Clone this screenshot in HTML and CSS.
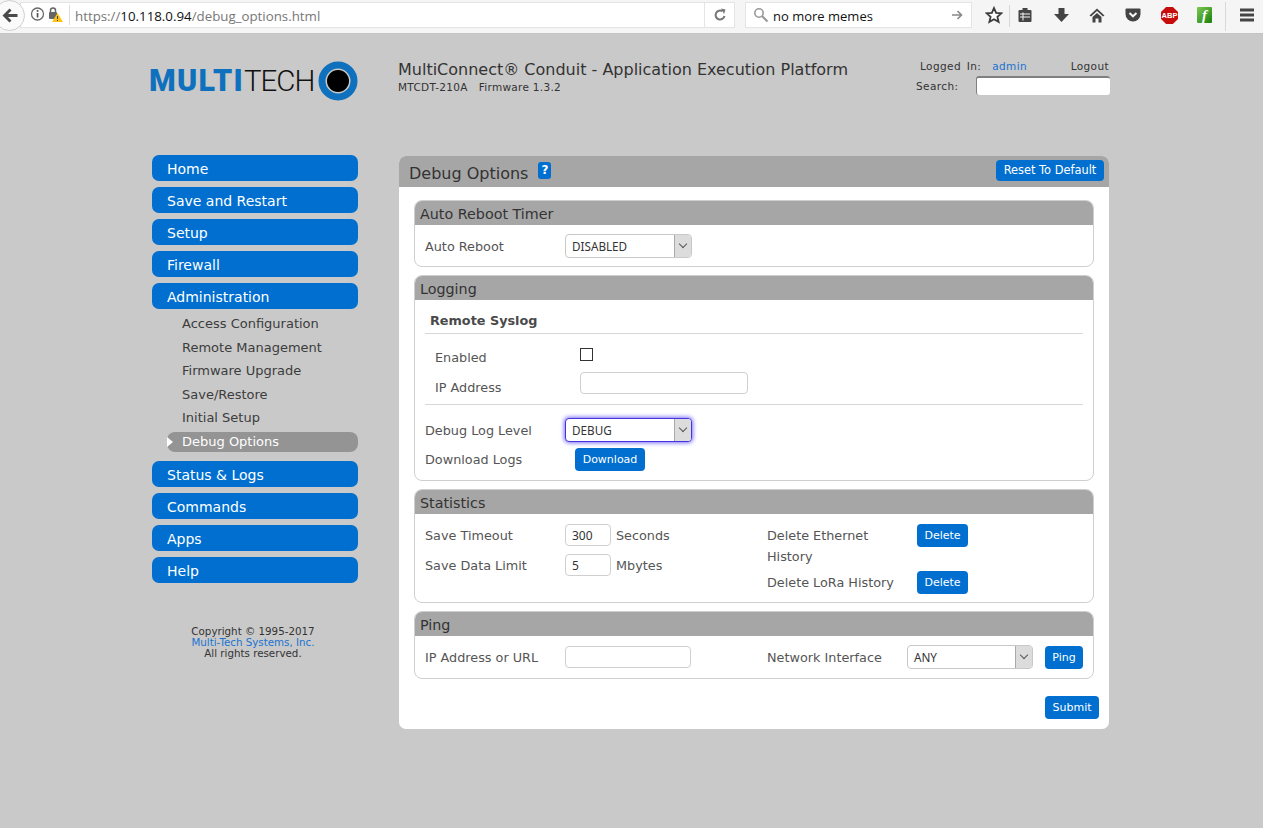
FILE: index.html
```html
<!DOCTYPE html>
<html lang="en">
<head>
  <meta charset="UTF-8">
  <title>Debug Options</title>
  <link rel="stylesheet" href="styles.css">
</head>
<body>
  <div class="browser-bar">
    <div class="back-btn">
      <svg width="16" height="15" viewBox="0 0 16 15"><path d="M7.5 0.5 L0.5 7.5 L7.5 14.5 L9.5 12.5 L6 9 H15.5 V6 H6 L9.5 2.5 Z" fill="#4a4a4a"/></svg>
    </div>
    <div class="url-box">
      <svg class="url-icons" width="34" height="18" viewBox="0 0 34 18">
        <circle cx="7.5" cy="8" r="6" fill="#fff" stroke="#6a6a6a" stroke-width="1.3"/>
        <rect x="6.7" y="7" width="1.7" height="4.5" fill="#555"/><rect x="6.7" y="4" width="1.7" height="1.8" fill="#555"/>
        <rect x="19" y="6" width="8" height="7" rx="1" fill="#666"/>
        <path d="M20.5 6 V4.5 a2.5 2.5 0 0 1 5 0 V6" fill="none" stroke="#666" stroke-width="1.5"/>
        <path d="M27.5 7 L33 16 H22 Z" fill="#fdc21a"/>
        <rect x="27" y="10" width="1" height="3" fill="#444"/><rect x="27" y="14" width="1" height="1" fill="#444"/>
      </svg>
      <span class="url-sep"></span>
      <span class="url-text">https://<b>10.118.0.94</b>/debug_options.html</span>
      <span class="url-reload">
        <svg width="14" height="14" viewBox="0 0 14 14"><path d="M11.5 8 A4.5 4.5 0 1 1 9.5 3.2" fill="none" stroke="#777" stroke-width="2"/><path d="M8 0.5 L12.5 1.5 L11 6 Z" fill="#777"/></svg>
      </span>
    </div>
    <div class="search-box">
      <svg width="16" height="16" viewBox="0 0 16 16"><circle cx="6" cy="6" r="4.2" fill="none" stroke="#999" stroke-width="1.6"/><path d="M9 9 L14.5 14.5" stroke="#999" stroke-width="2.2"/></svg>
      <span class="search-text">no more memes</span>
      <svg class="search-go" width="12" height="12" viewBox="0 0 12 12"><path d="M1 6 H10 M6.5 2 L10.5 6 L6.5 10" fill="none" stroke="#888" stroke-width="1.6"/></svg>
    </div>
    <div class="tool-icons">
      <svg class="i-star" width="18" height="18" viewBox="0 0 18 18"><path d="M9 2 L11.1 6.8 L16.3 7.3 L12.4 10.8 L13.6 15.9 L9 13.2 L4.4 15.9 L5.6 10.8 L1.7 7.3 L6.9 6.8 Z" fill="#fff" stroke="#3c3c3c" stroke-width="1.8"/></svg>
      <span class="tool-sep"></span>
      <svg class="i-clip" width="14" height="16" viewBox="0 0 14 16"><path d="M1.5 3 H12.5 Q13.5 3 13.5 4 V14 Q13.5 15 12.5 15 H1.5 Q0.5 15 0.5 14 V4 Q0.5 3 1.5 3 Z" fill="#444"/><rect x="4.5" y="1" width="5" height="3" fill="#444"/><path d="M2 7 H12 M2 10 H12 M5 5.5 V13.5" stroke="#f5f5f5" stroke-width="1"/></svg>
      <svg class="i-down" width="15" height="16" viewBox="0 0 15 16"><path d="M4.5 1 H10.5 V7 H15 L7.5 15 L0 7 H4.5 Z" fill="#444"/></svg>
      <svg class="i-home" width="16" height="15" viewBox="0 0 16 15"><path d="M8 0.5 L15.5 7.5 L14 8.5 L8 3 L2 8.5 L0.5 7.5 Z M3.5 9 L8 5 L12.5 9 V14.5 H9.5 V10.5 H6.5 V14.5 H3.5 Z" fill="#444"/></svg>
      <svg class="i-pocket" width="16" height="14" viewBox="0 0 16 14"><path d="M1.5 0.5 H14.5 Q15.5 0.5 15.5 1.5 V6 A7.5 7.5 0 0 1 0.5 6 V1.5 Q0.5 0.5 1.5 0.5 Z" fill="#444"/><path d="M4.5 5 L8 8.3 L11.5 5" fill="none" stroke="#f5f5f5" stroke-width="2"/></svg>
      <span class="i-abp">ABP</span>
      <span class="i-flash">f</span>
      <span class="tool-sep tool-sep-menu"></span>
      <svg class="i-menu" width="16" height="14" viewBox="0 0 16 14"><path d="M1 0.5 H15 V3.5 H1 Z M1 5.5 H15 V8.5 H1 Z M1 10.5 H15 V13.5 H1 Z" fill="#444"/></svg>
    </div>
  </div>

  <div class="page">
    <header class="site-header">
      <div class="logo">
        <span class="logo-text"><b>MULTI</b>TECH</span>
        <svg class="logo-mark" width="40" height="40" viewBox="0 0 40 40"><circle cx="20" cy="20" r="11" fill="#000"/><circle cx="20" cy="20" r="16" fill="none" stroke="#0f71bd" stroke-width="7"/></svg>
      </div>
      <div class="product">
        <div class="product-name">MultiConnect® Conduit - Application Execution Platform</div>
        <div class="product-sub">MTCDT-210A&nbsp;&nbsp; Firmware 1.3.2</div>
      </div>
      <div class="user-box">
        <div class="user-row"><span class="user-label">Logged In:</span><a class="user-name">admin</a><span class="user-logout">Logout</span></div>
        <div class="search-row"><span>Search:</span><input class="site-search" type="text"></div>
      </div>
    </header>

    <div class="content">
      <nav class="sidebar">
        <a class="nav-btn">Home</a>
        <a class="nav-btn">Save and Restart</a>
        <a class="nav-btn">Setup</a>
        <a class="nav-btn">Firewall</a>
        <a class="nav-btn">Administration</a>
        <ul class="subnav">
          <li>Access Configuration</li>
          <li>Remote Management</li>
          <li>Firmware Upgrade</li>
          <li>Save/Restore</li>
          <li>Initial Setup</li>
          <li class="active">Debug Options</li>
        </ul>
        <a class="nav-btn">Status &amp; Logs</a>
        <a class="nav-btn">Commands</a>
        <a class="nav-btn">Apps</a>
        <a class="nav-btn">Help</a>
        <div class="copyright">Copyright © 1995-2017<br><a>Multi-Tech Systems, Inc.</a><br>All rights reserved.</div>
      </nav>

      <main class="panel">
        <div class="panel-head">
          <h1>Debug Options</h1>
          <span class="help-badge">?</span>
          <button class="btn btn-reset">Reset To Default</button>
        </div>
        <div class="panel-body">

          <section class="box">
            <h2>Auto Reboot Timer</h2>
            <div class="box-body">
              <div class="row row-reboot">
                <label>Auto Reboot</label>
                <div class="select select-reboot">DISABLED<span class="arrow"></span></div>
              </div>
            </div>
          </section>

          <section class="box">
            <h2>Logging</h2>
            <div class="box-body box-logging">
              <div class="syslog">
                <h3>Remote Syslog</h3>
                <div class="row row-enabled">
                  <label>Enabled</label>
                  <span class="checkbox"></span>
                </div>
                <div class="row row-ip">
                  <label>IP Address</label>
                  <input class="text-input input-ip" type="text">
                </div>
              </div>
              <div class="row row-level">
                <label>Debug Log Level</label>
                <div class="select select-debug">DEBUG<span class="arrow"></span></div>
              </div>
              <div class="row row-download">
                <label>Download Logs</label>
                <button class="btn">Download</button>
              </div>
            </div>
          </section>

          <section class="box">
            <h2>Statistics</h2>
            <div class="box-body stats">
              <div class="stats-col">
                <div class="row row-timeout">
                  <label>Save Timeout</label>
                  <input class="text-input input-small" type="text" value="300">
                  <span class="unit">Seconds</span>
                </div>
                <div class="row row-limit">
                  <label>Save Data Limit</label>
                  <input class="text-input input-small" type="text" value="5">
                  <span class="unit">Mbytes</span>
                </div>
              </div>
              <div class="stats-col stats-right">
                <label class="del-label del-eth">Delete Ethernet History</label>
                <button class="btn btn-del">Delete</button>
                <label class="del-label del-lora">Delete LoRa History</label>
                <button class="btn btn-del">Delete</button>
              </div>
            </div>
          </section>

          <section class="box">
            <h2>Ping</h2>
            <div class="box-body ping">
              <label>IP Address or URL</label>
              <input class="text-input input-url" type="text">
              <label class="net-label">Network Interface</label>
              <div class="select select-net">ANY<span class="arrow"></span></div>
              <button class="btn btn-ping">Ping</button>
            </div>
          </section>

          <div class="submit-row"><button class="btn">Submit</button></div>
        </div>
      </main>
    </div>
  </div>
</body>
</html>
```

FILE: styles.css
```css
* {
  box-sizing: border-box;
}

body {
  margin: 0;
  background-color: #c9c9c9;
  color: #444;
  font-family: "DejaVu Sans", Verdana, sans-serif;
  font-size: 12.8px;
  overflow-x: hidden;
}

/* browser chrome */
.browser-bar {
  display: flex;
  align-items: flex-start;
  height: 34px;
  padding-top: 2px;
  background-color: #f5f5f5;
  border-bottom: 1px solid #c4c4c4;
}

.back-btn {
  position: relative;
  display: flex;
  align-items: center;
  flex: none;
  width: 31px;
  height: 31px;
  margin-top: -2px;
  margin-left: -6px;
  padding-left: 7px;
  background: #fafafa;
  border: 1px solid #cfcfcf;
  border-radius: 50%;
  z-index: 1;
}

.url-box {
  display: flex;
  align-items: center;
  width: 715px;
  height: 26px;
  margin-left: -5px;
  padding-left: 5px;
  background: #fff;
  border: 1px solid #e4e4e4;
  flex: none;
}

.url-icons {
  margin-left: 4px;
  flex: none;
}

.url-sep {
  width: 1px;
  height: 20px;
  background: #dcdcdc;
  margin: 0 5px;
}

.url-text {
  margin-top: 2px;
  font-family: "Open Sans", sans-serif;
  font-size: 13.3px;
  color: #777;
}

.url-text b {
  font-weight: normal;
  color: #111;
}

.url-reload {
  margin-left: auto;
  width: 30px;
  height: 24px;
  border-left: 1px solid #e4e4e4;
  display: flex;
  align-items: center;
  justify-content: center;
}

.search-box {
  display: flex;
  align-items: center;
  width: 227px;
  height: 26px;
  margin-left: 10px;
  padding: 0 8px 0 7px;
  background: #fff;
  border: 1px solid #e4e4e4;
  flex: none;
}

.search-text {
  margin-top: 2px;
  margin-left: 4px;
  font-family: "Open Sans", sans-serif;
  font-size: 13px;
  color: #111;
}

.search-go {
  margin-left: auto;
}

.tool-icons {
  position: relative;
  flex: 1;
  height: 33px;
  margin-top: -2px;
}

.tool-icons > * {
  position: absolute;
}

.i-star { left: 13px; top: 6px; }
.tool-sep { left: 37px; top: 5px; width: 1px; height: 22px; background: #d8d8d8; }
.i-clip { left: 46px; top: 7px; }
.i-down { left: 82px; top: 7px; }
.i-home { left: 117px; top: 8px; }
.i-pocket { left: 153px; top: 8px; }
.tool-sep-menu { left: 253px; top: 2px; height: 29px; }
.i-menu { left: 267px; top: 8px; }

.i-abp {
  left: 189px;
  top: 7px;
  width: 17px;
  height: 17px;
  background: #c70d0c;
  clip-path: polygon(30% 0, 70% 0, 100% 30%, 100% 70%, 70% 100%, 30% 100%, 0 70%, 0 30%);
  color: #fff;
  font: bold 7.5px/17px "Liberation Sans", sans-serif;
  text-align: center;
}

.i-flash {
  left: 225px;
  top: 7px;
  width: 15px;
  height: 16px;
  background: linear-gradient(135deg, #7ec850, #17800f);
  border-radius: 1px;
  color: #fff;
  font: italic bold 15px/16px "Liberation Serif", serif;
  text-align: center;
}

/* page */
.page {
  width: 958px;
  margin-left: 152px;
}

.site-header {
  display: flex;
  height: 121px;
}

.logo {
  width: 246px;
  padding-top: 27px;
  display: flex;
  align-items: flex-start;
  flex: none;
}

.logo-text {
  margin-top: 2px;
  margin-left: -3px;
  width: 168.5px;
  font-family: Roboto, "Liberation Sans", sans-serif;
  font-size: 29.5px;
  font-weight: 300;
  line-height: 36px;
  letter-spacing: -1px;
  color: #111;
  white-space: nowrap;
}

.logo-text b {
  color: #0f71bd;
  font-size: 30.5px;
  font-weight: 900;
  letter-spacing: 1.2px;
}

.logo-mark {
  flex: none;
}

.product {
  width: 496px;
  padding-top: 25px;
  flex: none;
}

.product-name {
  font-size: 16px;
  line-height: 22px;
  color: #333;
  white-space: nowrap;
}

.product-sub {
  font-size: 10.5px;
  line-height: 12px;
  letter-spacing: 0.3px;
  color: #333;
}

.user-box {
  flex: 1;
  padding-top: 25px;
  font-size: 10.5px;
  letter-spacing: 0.4px;
  color: #333;
  margin-left: 22px;
}

.user-row {
  display: flex;
  height: 14px;
  padding: 0 1px 0 4px;
  line-height: 14px;
  word-spacing: 2px;
}

.user-name {
  margin-left: 11px;
  color: #1a73d0;
}

.user-logout {
  margin-left: auto;
}

.search-row {
  display: flex;
  align-items: center;
  justify-content: space-between;
  margin-top: 3px;
}

.site-search {
  width: 134px;
  height: 19px;
  background: #fff;
  border: 0;
  border-top: 2px solid #808080;
  border-left: 1px solid #808080;
  border-radius: 3px;
}

.content {
  display: flex;
  align-items: flex-start;
}

/* left menu */
.sidebar {
  width: 206px;
  margin-right: 41px;
  flex: none;
}

.nav-btn {
  display: block;
  height: 26px;
  margin-bottom: 6px;
  padding-left: 15px;
  background-color: #006fd0;
  border-radius: 7px;
  color: #fff;
  font-size: 14px;
  line-height: 28px;
}

.subnav {
  list-style: none;
  margin: -3px 0 0;
  padding: 0 0 0 15px;
}

.subnav li {
  height: 23.6px;
  padding-left: 15px;
  font-size: 13px;
  line-height: 23.6px;
  color: #3c3c3c;
}

.subnav .active {
  position: relative;
  height: 20px;
  margin-top: 2px;
  margin-bottom: 9px;
  background-color: #949494;
  border-radius: 8px;
  line-height: 20px;
  color: #fff;
}

.subnav .active::before {
  content: "";
  position: absolute;
  left: 0;
  top: 5px;
  border-left: 6px solid #fff;
  border-top: 5px solid transparent;
  border-bottom: 5px solid transparent;
}

.copyright {
  margin-top: 43px;
  padding-right: 4px;
  font-size: 10.3px;
  line-height: 11px;
  text-align: center;
  color: #333;
}

.copyright a {
  color: #1a73d0;
}

/* main panel */
.panel {
  width: 710px;
  height: 573px;
  margin-top: 1px;
  background-color: #fff;
  border-radius: 7px;
  overflow: hidden;
}

.panel-head {
  display: flex;
  align-items: center;
  height: 31px;
  padding: 0 5px 0 10px;
  background-color: #a6a6a6;
}

.panel-head h1 {
  margin: 4px 0 0;
  font-size: 16px;
  font-weight: normal;
  color: #333;
}

.help-badge {
  width: 13px;
  height: 17px;
  margin-left: 10px;
  margin-top: -2px;
  background-color: #006fd0;
  border-radius: 3px;
  color: #fff;
  font-size: 12px;
  font-weight: bold;
  line-height: 17px;
  text-align: center;
}

.btn {
  height: 23px;
  padding: 0 7px;
  background-color: #006fd0;
  border: 0;
  border-radius: 4px;
  color: #fff;
  font-family: "DejaVu Sans", Verdana, sans-serif;
  font-size: 11px;
}

.btn-reset {
  margin-left: auto;
  width: 108px;
  height: 21px;
  margin-top: -3px;
  padding: 0;
  font-size: 11.4px;
}

.panel-body {
  padding: 13px 15px 0;
}

.box {
  margin-bottom: 8px;
  background: #fff;
  border: 1px solid #cfcfcf;
  border-radius: 8px;
  overflow: hidden;
}

.box h2 {
  height: 25px;
  margin: -1px -1px 0;
  padding-left: 6px;
  background-color: #a6a6a6;
  font-size: 14.3px;
  font-weight: normal;
  line-height: 28px;
  color: #333;
}

.box-body {
  padding: 0 10px;
}

label {
  color: #555;
}

.row {
  display: flex;
  align-items: center;
}

.row label {
  width: 140px;
  flex: none;
}

.row-reboot {
  height: 41px;
  padding-top: 1px;
}

.select {
  position: relative;
  height: 24px;
  padding-left: 6px;
  background: #fff;
  border: 1px solid #c8c8c8;
  border-radius: 4px;
  color: #333;
  font-family: "Noto Sans", sans-serif;
  font-size: 11.7px;
  line-height: 22px;
}

.arrow {
  position: absolute;
  right: 0;
  top: 0;
  bottom: 0;
  width: 17px;
  background: #dcdcdc;
  border-left: 1px solid #aaa;
  border-radius: 0 3px 3px 0;
}

.arrow::after {
  content: "";
  position: absolute;
  left: 5px;
  top: 6px;
  width: 5px;
  height: 5px;
  border-right: 1px solid #555;
  border-bottom: 1px solid #555;
  transform: rotate(45deg);
}

.select-reboot {
  width: 127px;
}

.box-logging {
  padding-bottom: 6px;
}

.syslog {
  padding-left: 10px;
  padding-bottom: 2px;
  border-bottom: 1px solid #d8d8d8;
}

.syslog h3 {
  height: 34px;
  margin: 0 0 0 -10px;
  padding-left: 5px;
  border-bottom: 1px solid #d8d8d8;
  font-size: 12.8px;
  line-height: 41px;
  color: #4a4a4a;
}

.row-enabled {
  height: 31px;
  margin-top: 7px;
}

.row-enabled label {
  margin-top: 2px;
  width: 145px;
}

.checkbox {
  width: 13px;
  height: 13px;
  margin-top: -5px;
  border: 1px solid #333;
  background: #fff;
}

.row-ip {
  height: 30px;
}

.row-ip label {
  width: 145px;
}

.text-input {
  height: 22px;
  padding: 0 6px;
  border: 1px solid #cfcfcf;
  border-radius: 4px;
  color: #333;
  font-family: "Noto Sans", sans-serif;
  font-size: 12px;
}

.input-ip {
  width: 168px;
  margin-top: -8px;
}

.row-level {
  height: 30px;
  margin-top: 10px;
}

.select-debug {
  width: 127px;
  border-color: #4433e0;
  box-shadow: 0 0 4px 1px #7a70f5;
}

.row-download {
  height: 30px;
  margin-top: -1px;
}

.row-download .btn {
  margin-left: 10px;
  width: 70px;
  padding: 0;
}

.stats {
  display: flex;
  height: 88px;
}

.stats-col {
  width: 342px;
  flex: none;
}

.row-timeout {
  height: 30px;
  margin-top: 6px;
}

.row-limit {
  height: 30px;
}

.input-small {
  width: 46px;
}

.unit {
  margin-left: 5px;
  color: #555;
}

.stats-right {
  display: grid;
  grid-template-columns: 150px 51px;
  align-content: start;
  padding-top: 10px;
}

.del-label {
  line-height: 21px;
  width: 130px;
}

.del-eth {
  margin-top: 1px;
  height: 44px;
}

.del-lora {
  margin-top: 3px;
}

.btn-del {
  width: 51px;
  padding: 0;
}

.btn-del:last-child {
  margin-top: 2px;
}

.ping {
  display: flex;
  align-items: center;
  height: 42px;
}

.ping label {
  width: 140px;
  flex: none;
}

.input-url {
  width: 126px;
}

.ping .net-label {
  margin-left: 76px;
  width: 140px;
}

.select-net {
  width: 126px;
}

.btn-ping {
  margin-left: 12px;
  width: 38px;
  padding: 0;
}

.submit-row {
  display: flex;
  justify-content: flex-end;
  margin-top: 17px;
  margin-right: -5px;
}

.submit-row .btn {
  width: 54px;
  padding: 0;
}
```
